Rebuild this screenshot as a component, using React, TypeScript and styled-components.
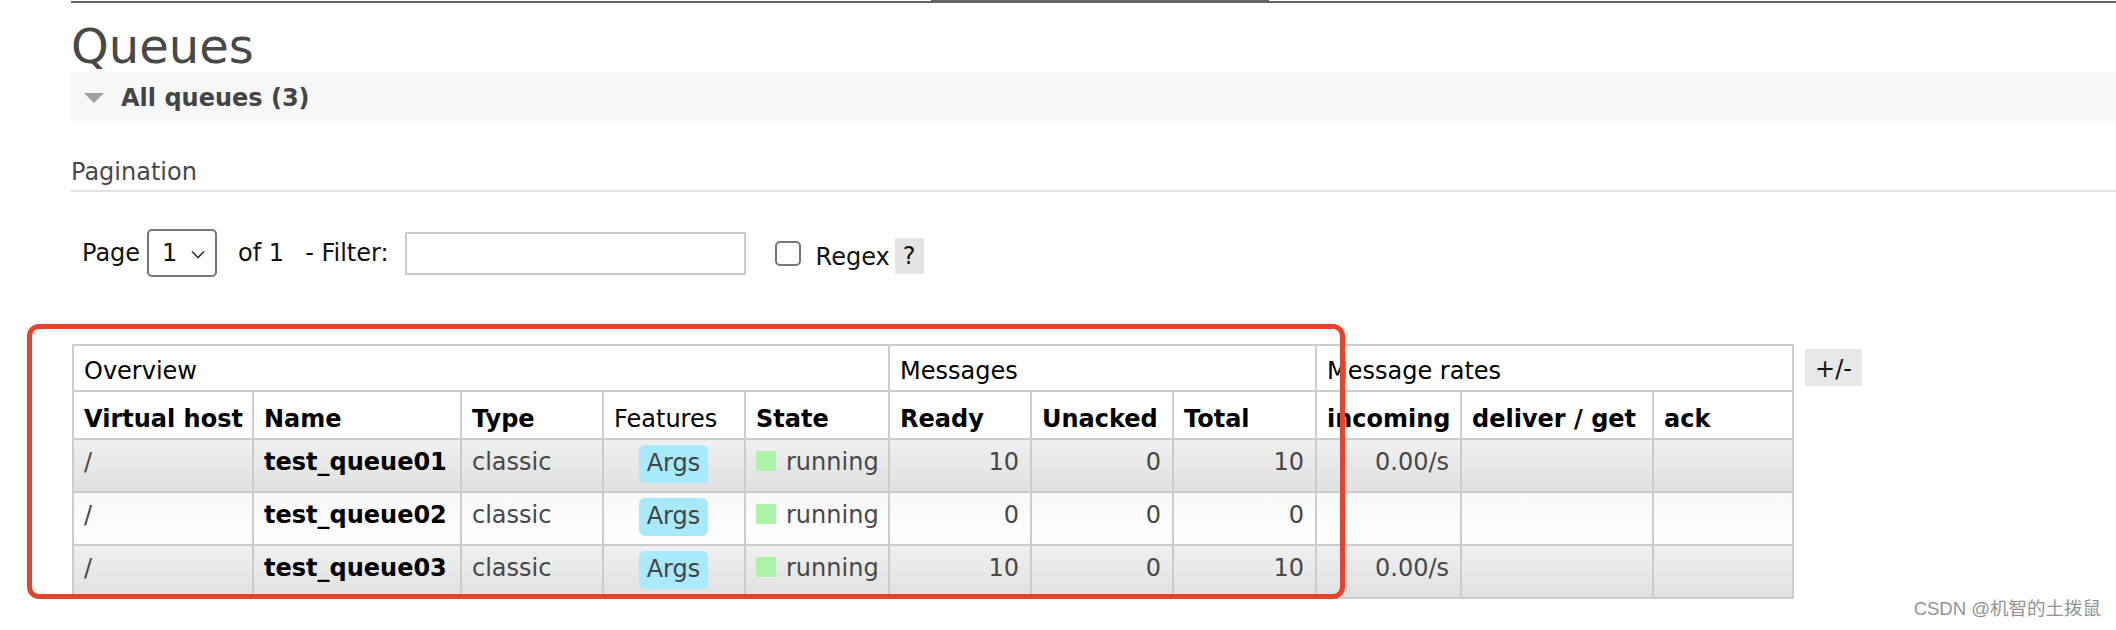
import React from "react";
import styled, { createGlobalStyle } from "styled-components";

const GlobalStyle = createGlobalStyle`
  html, body {
    margin: 0;
    padding: 0;
    background: #fff;
  }
  body {
    font-family: "DejaVu Sans", Verdana, sans-serif;
    font-size: 24px;
    color: #000;
  }
`;

const Screen = styled.div`
  position: relative;
  width: 2116px;
  height: 630px;
  overflow: hidden;
`;

const Main = styled.div`
  padding-left: 71px;
`;

const TopRule = styled.div`
  display: flex;
  margin-top: 1px;
  height: 2px;
  background: #666;
`;

const ActiveTab = styled.div`
  margin-left: 860px;
  margin-top: -1px;
  width: 338px;
  height: 3px;
  background: #666;
`;

const Title = styled.h1`
  margin: 17px 0 0;
  font-size: 48px;
  font-weight: normal;
  line-height: 52px;
  color: #484848;
`;

const SectionBar = styled.div`
  display: flex;
  align-items: center;
  height: 49px;
  background: #f7f7f7;
`;

const Triangle = styled.span`
  width: 0;
  height: 0;
  margin: 3px 0 0 13px;
  border-left: 10px solid transparent;
  border-right: 10px solid transparent;
  border-top: 10px solid #a0a0a0;
`;

const SectionTitle = styled.span`
  margin-left: 17px;
  padding-top: 2px;
  font-weight: bold;
  line-height: 28px;
  color: #444;
`;

const SubHeading = styled.h3`
  margin: 37px 0 0;
  padding-bottom: 4px;
  font-size: 24px;
  font-weight: normal;
  line-height: 28px;
  color: #484848;
  border-bottom: 2px solid #e2e2e2;
`;

const Controls = styled.div`
  display: flex;
  align-items: center;
  height: 48px;
  margin-top: 37px;
  padding-left: 11px;
  line-height: 28px;
  color: #111;
`;

const Label = styled.span<{ $gap?: number; $drop?: number }>`
  margin-left: ${(p) => p.$gap ?? 0}px;
  padding-top: ${(p) => p.$drop ?? 0}px;
  white-space: pre;
`;

const SelectBox = styled.div`
  display: flex;
  align-items: center;
  box-sizing: border-box;
  width: 70px;
  height: 48px;
  margin-left: 7px;
  padding-left: 13px;
  border: 2px solid #767676;
  border-radius: 5px;
  color: #111;
`;

const Chevron = styled.svg`
  margin-left: 14px;
  margin-top: 2px;
`;

const FilterInput = styled.div`
  box-sizing: border-box;
  width: 341px;
  height: 43px;
  margin-left: 16px;
  border: 2px solid #cbcbcb;
  background: #fff;
`;

const CheckBox = styled.span`
  box-sizing: border-box;
  width: 26px;
  height: 25px;
  margin-left: 29px;
  border: 2px solid #767676;
  border-radius: 5px;
  background: #fff;
`;

const HelpBox = styled.span`
  display: flex;
  align-items: center;
  justify-content: center;
  width: 29px;
  height: 36px;
  margin: 6px 0 0 5px;
  background: #e4e4e4;
  color: #111;
`;

const TableArea = styled.div`
  display: flex;
  align-items: flex-start;
  margin-top: 67px;
  padding-left: 1px;
`;

const QueueTable = styled.table`
  border-collapse: separate;
  border-spacing: 0;
  table-layout: fixed;
  width: 1722px;
  border-left: 2px solid #ccc;
  border-top: 2px solid #ccc;
  line-height: 28px;
`;

const GroupRow = styled.tr`
  height: 46px;
`;

const HeadRow = styled.tr`
  height: 48px;
`;

const DataRow = styled.tr<{ $alt: boolean }>`
  height: 53px;
  & > td {
    background: ${(p) =>
      p.$alt
        ? "linear-gradient(to bottom, #f8f8f8 0%, #ffffff 100%)"
        : "linear-gradient(to bottom, #f0f0f0 0%, #e0e0e0 100%)"};
  }
`;

const Th = styled.th<{ $light?: boolean }>`
  box-sizing: border-box;
  padding: 0 10px;
  vertical-align: top;
  text-align: left;
  font-weight: ${(p) => (p.$light ? "normal" : "bold")};
  color: #000;
  background: #fff;
  border-right: 2px solid #ccc;
  border-bottom: 2px solid #ccc;
  white-space: nowrap;
  overflow: hidden;
`;

const GroupTh = styled(Th)`
  padding-top: 11px;
  font-weight: normal;
`;

const ColTh = styled(Th)`
  padding-top: 13px;
`;

const Td = styled.td<{ $align?: "left" | "right" | "center"; $strong?: boolean }>`
  box-sizing: border-box;
  padding: 8px 11px 0 10px;
  vertical-align: top;
  text-align: ${(p) => p.$align ?? "left"};
  font-weight: ${(p) => (p.$strong ? "bold" : "normal")};
  color: ${(p) => (p.$strong ? "#000" : "#484848")};
  border-right: 2px solid #ccc;
  border-bottom: 2px solid #ccc;
  white-space: nowrap;
`;

const ArgsTag = styled.span`
  display: inline-block;
  vertical-align: top;
  margin-top: -3px;
  padding: 5px 8px 6px;
  line-height: 27px;
  border-radius: 6px;
  background: #a9e9fc;
  color: #444;
`;

const StatusDot = styled.span`
  display: inline-block;
  vertical-align: top;
  width: 20px;
  height: 20px;
  margin: 3px 10px 0 0;
  background: #adf3a6;
`;

const ToggleButton = styled.span`
  margin: 5px 0 0 11px;
  padding: 6px 10px 3px;
  line-height: 28px;
  background: #e8e8e8;
  color: #111;
`;

const Annotation = styled.div`
  position: absolute;
  left: 27px;
  top: 324px;
  width: 1318px;
  height: 275px;
  box-sizing: border-box;
  border: 5px solid #e8432b;
  border-radius: 12px;
  pointer-events: none;
`;

const Watermark = styled.div`
  position: absolute;
  right: 15px;
  top: 599px;
  font-family: "Liberation Sans", "Noto Sans CJK SC", sans-serif;
  font-size: 18.5px;
  line-height: 20px;
  color: #939393;
  white-space: nowrap;
`;

const colWidths = [180, 208, 142, 142, 144, 142, 142, 143, 145, 192, 140];

type Queue = {
  name: string;
  ready: number;
  unacked: number;
  total: number;
  incoming: string;
};

const queues: Queue[] = [
  { name: "test_queue01", ready: 10, unacked: 0, total: 10, incoming: "0.00/s" },
  { name: "test_queue02", ready: 0, unacked: 0, total: 0, incoming: "" },
  { name: "test_queue03", ready: 10, unacked: 0, total: 10, incoming: "0.00/s" },
];

export default function App() {
  return (
    <Screen>
      <GlobalStyle />
      <Main>
        <TopRule>
          <ActiveTab />
        </TopRule>
        <Title>Queues</Title>
        <SectionBar>
          <Triangle />
          <SectionTitle>All queues (3)</SectionTitle>
        </SectionBar>
        <SubHeading>Pagination</SubHeading>
        <Controls>
          <Label>Page</Label>
          <SelectBox>
            <span>1</span>
            <Chevron width="14" height="9" viewBox="0 0 14 9">
              <path d="M1 1.5 L7 7.5 L13 1.5" fill="none" stroke="#333" strokeWidth="1.6" />
            </Chevron>
          </SelectBox>
          <Label $gap={21}>of 1</Label>
          <Label $gap={21}>- Filter:</Label>
          <FilterInput />
          <CheckBox />
          <Label $gap={15} $drop={8}>
            Regex
          </Label>
          <HelpBox>?</HelpBox>
        </Controls>
        <TableArea>
          <QueueTable>
            <colgroup>
              {colWidths.map((w, i) => (
                <col key={i} style={{ width: w }} />
              ))}
            </colgroup>
            <thead>
              <GroupRow>
                <GroupTh colSpan={5}>Overview</GroupTh>
                <GroupTh colSpan={3}>Messages</GroupTh>
                <GroupTh colSpan={3}>Message rates</GroupTh>
              </GroupRow>
              <HeadRow>
                <ColTh>Virtual host</ColTh>
                <ColTh>Name</ColTh>
                <ColTh>Type</ColTh>
                <ColTh $light>Features</ColTh>
                <ColTh>State</ColTh>
                <ColTh>Ready</ColTh>
                <ColTh>Unacked</ColTh>
                <ColTh>Total</ColTh>
                <ColTh>incoming</ColTh>
                <ColTh>deliver / get</ColTh>
                <ColTh>ack</ColTh>
              </HeadRow>
            </thead>
            <tbody>
              {queues.map((q, i) => (
                <DataRow key={q.name} $alt={i % 2 === 1}>
                  <Td>/</Td>
                  <Td $strong>{q.name}</Td>
                  <Td>classic</Td>
                  <Td $align="center">
                    <ArgsTag>Args</ArgsTag>
                  </Td>
                  <Td>
                    <StatusDot />
                    running
                  </Td>
                  <Td $align="right">{q.ready}</Td>
                  <Td $align="right">{q.unacked}</Td>
                  <Td $align="right">{q.total}</Td>
                  <Td $align="right">{q.incoming}</Td>
                  <Td />
                  <Td />
                </DataRow>
              ))}
            </tbody>
          </QueueTable>
          <ToggleButton>+/-</ToggleButton>
        </TableArea>
      </Main>
      <Annotation />
      <Watermark>CSDN @机智的土拨鼠</Watermark>
    </Screen>
  );
}
